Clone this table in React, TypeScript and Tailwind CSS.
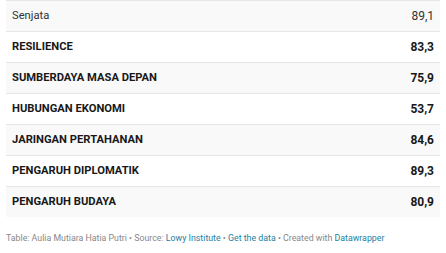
const ROWS = [
  { label: "Senjata", value: "89,1", bold: false },
  { label: "RESILIENCE", value: "83,3", bold: true },
  { label: "SUMBERDAYA MASA DEPAN", value: "75,9", bold: true },
  { label: "HUBUNGAN EKONOMI", value: "53,7", bold: true },
  { label: "JARINGAN PERTAHANAN", value: "84,6", bold: true },
  { label: "PENGARUH DIPLOMATIK", value: "89,3", bold: true },
  { label: "PENGARUH BUDAYA", value: "80,9", bold: true },
];

export default function App() {
  return (
    <div className="w-[446px] h-[253px] bg-white px-[6px] font-['Roboto',sans-serif] text-[#181818]">
      {/* Table body */}
      <div className="flex flex-col">
        {ROWS.map((row, i) => (
          <div
            key={row.label}
            className={
              "flex items-center justify-between h-[31px] border-t border-[#e6e6e6] px-[6px] " +
              (i % 2 === 0 ? "bg-[#f9f9f9]" : "bg-white")
            }
          >
            <span className={row.bold ? "text-[11.2px] font-bold" : "text-[11.2px] text-[#333]"}>
              {row.label}
            </span>
            <span
              className={
                "text-[12px] tabular-nums " + (row.bold ? "font-bold" : "text-[#333]")
              }
            >
              {row.value}
            </span>
          </div>
        ))}
      </div>

      {/* Footer */}
      <div className="mt-[17px] text-[8.8px] text-[#888] leading-none">
        Table: Aulia Mutiara Hatia Putri • Source:{" "}
        <a className="text-[#1d81a2]">Lowy Institute</a> •{" "}
        <a className="text-[#1d81a2]">Get the data</a> • Created with{" "}
        <a className="text-[#1d81a2]">Datawrapper</a>
      </div>
    </div>
  );
}
